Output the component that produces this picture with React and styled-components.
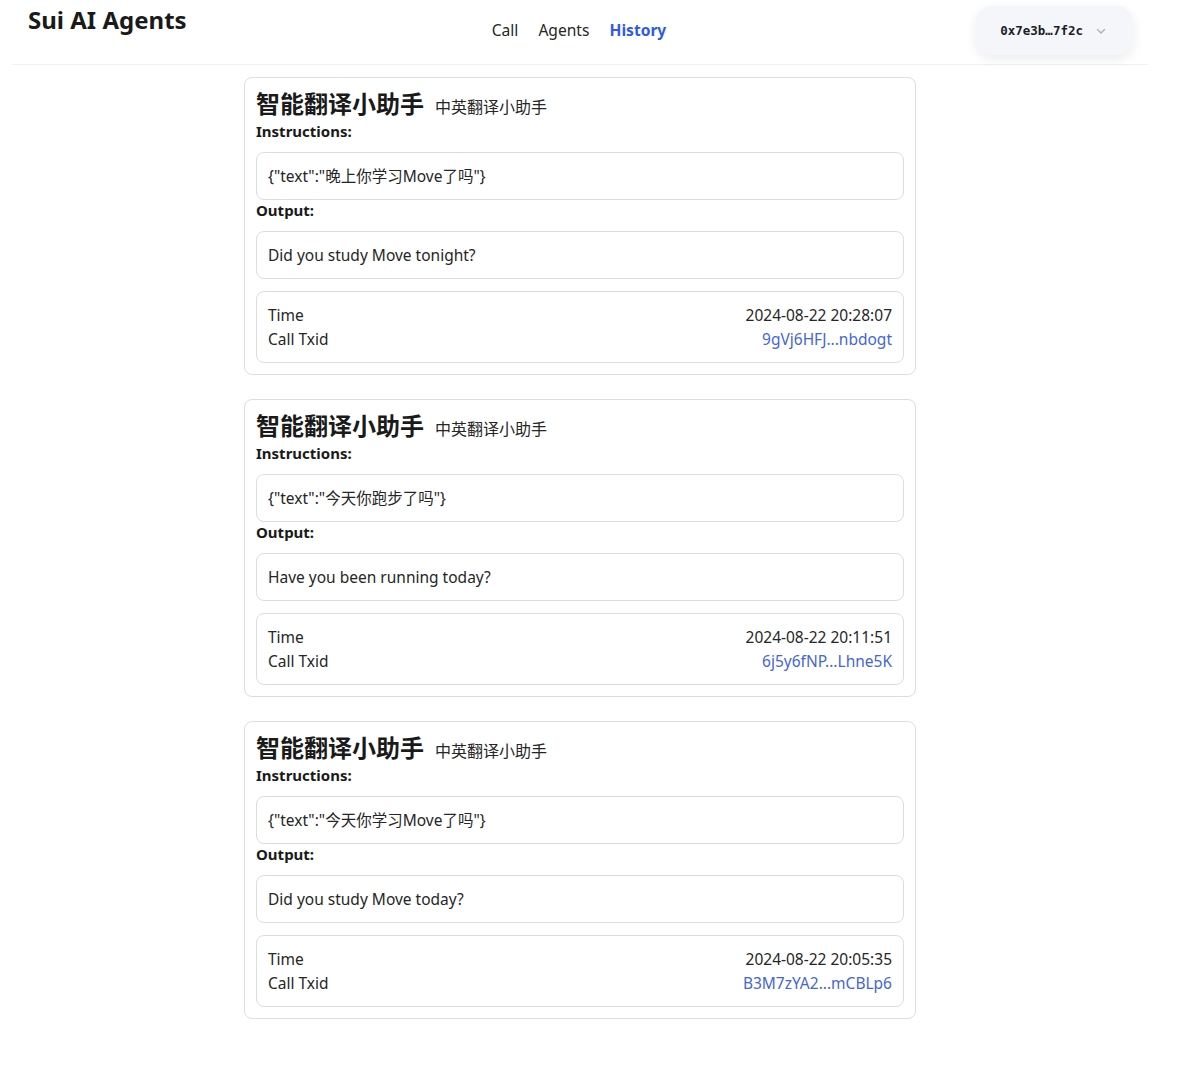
import React from "react";
import styled, { createGlobalStyle } from "styled-components";

const Global = createGlobalStyle`
  html, body { margin: 0; padding: 0; background: #ffffff; }
  body {
    font-family: "Noto Sans", "Noto Sans CJK SC", sans-serif;
    color: #1f1f1f;
  }
`;

const Page = styled.div`
  padding: 0 35px 40px 12px;
`;

const Header = styled.header`
  height: 64px;
  border-bottom: 1px solid #f0f0f2;
  display: grid;
  grid-template-columns: 1fr auto 1fr;
  align-items: start;
  padding: 0 15px 0 16px;
`;

const Brand = styled.h1`
  margin: 0;
  padding-top: 5px;
  font-size: 24px;
  line-height: 30px;
  font-weight: 700;
  color: #1a1a1a;
`;

const Nav = styled.nav`
  display: flex;
  gap: 20px;
  padding-top: 18px;
  margin-left: -3px;
`;

const NavLink = styled.a`
  font-size: 15.6px;
  line-height: 24px;
  color: ${(p) => (p.$active ? "#2f5ae6" : "#262626")};
  font-weight: ${(p) => (p.$active ? 700 : 400)};
  text-decoration: none;
  cursor: pointer;
`;

const WalletWrap = styled.div`
  display: flex;
  justify-content: flex-end;
  padding-top: 6px;
`;

const WalletButton = styled.button`
  height: 49px;
  padding: 0 26px 0 24px;
  border: none;
  border-radius: 16px;
  background: #f4f6f9;
  box-shadow: 0 4px 12px rgba(0, 0, 0, 0.08);
  display: flex;
  align-items: center;
  gap: 12px;
  font-family: "DejaVu Sans Mono", "Liberation Mono", monospace;
  font-size: 12.5px;
  font-weight: 700;
  color: #1c1c2a;
  cursor: pointer;
`;

const Main = styled.main`
  width: 672px;
  margin: 12px auto 0;
  display: flex;
  flex-direction: column;
  gap: 24px;
`;

const Card = styled.section`
  border: 1px solid #dcdde2;
  border-radius: 8px;
  padding: 11px;
`;

const TitleRow = styled.div`
  display: flex;
  align-items: baseline;
  gap: 11px;
  height: 32px;
`;

const Title = styled.h2`
  margin: 0;
  font-size: 24px;
  line-height: 30px;
  font-weight: 700;
  color: #1a1a1a;
`;

const Subtitle = styled.span`
  font-size: 16px;
  color: #262626;
`;

const Label = styled.div`
  font-size: 15px;
  line-height: 20px;
  font-weight: 700;
  color: #1a1a1a;
  margin-bottom: 11px;
`;

const Box = styled.div`
  border: 1px solid #dcdde2;
  border-radius: 8px;
  padding: 11px;
  font-size: 15.5px;
  line-height: 24px;
  color: #262626;
  margin-bottom: ${(p) => p.$mb || 0}px;
`;

const InfoRow = styled.div`
  display: flex;
  justify-content: space-between;
`;

const TxLink = styled.a`
  color: #4466d6;
  text-decoration: none;
`;

const records = [
  {
    input: '{"text":"晚上你学习Move了吗"}',
    output: "Did you study Move tonight?",
    time: "2024-08-22 20:28:07",
    tx: "9gVj6HFJ...nbdogt",
  },
  {
    input: '{"text":"今天你跑步了吗"}',
    output: "Have you been running today?",
    time: "2024-08-22 20:11:51",
    tx: "6j5y6fNP...Lhne5K",
  },
  {
    input: '{"text":"今天你学习Move了吗"}',
    output: "Did you study Move today?",
    time: "2024-08-22 20:05:35",
    tx: "B3M7zYA2...mCBLp6",
  },
];

const Chevron = () => (
  <svg width="12" height="12" viewBox="0 0 12 12" fill="none">
    <path d="M2.5 4.5 L6 8 L9.5 4.5" stroke="#a8afb9" strokeWidth="1.3" strokeLinecap="round" strokeLinejoin="round" />
  </svg>
);

export default function App() {
  return (
    <>
      <Global />
      <Page>
        <Header>
          <Brand>Sui AI Agents</Brand>
          <Nav>
            <NavLink>Call</NavLink>
            <NavLink>Agents</NavLink>
            <NavLink $active>History</NavLink>
          </Nav>
          <WalletWrap>
            <WalletButton>
              <span>0x7e3b…7f2c</span>
              <Chevron />
            </WalletButton>
          </WalletWrap>
        </Header>
        <Main>
          {records.map((r, i) => (
            <Card key={i}>
              <TitleRow>
                <Title>智能翻译小助手</Title>
                <Subtitle>中英翻译小助手</Subtitle>
              </TitleRow>
              <Label>Instructions:</Label>
              <Box>{r.input}</Box>
              <Label>Output:</Label>
              <Box $mb={12}>{r.output}</Box>
              <Box>
                <InfoRow>
                  <span>Time</span>
                  <span>{r.time}</span>
                </InfoRow>
                <InfoRow>
                  <span>Call Txid</span>
                  <TxLink>{r.tx}</TxLink>
                </InfoRow>
              </Box>
            </Card>
          ))}
        </Main>
      </Page>
    </>
  );
}
